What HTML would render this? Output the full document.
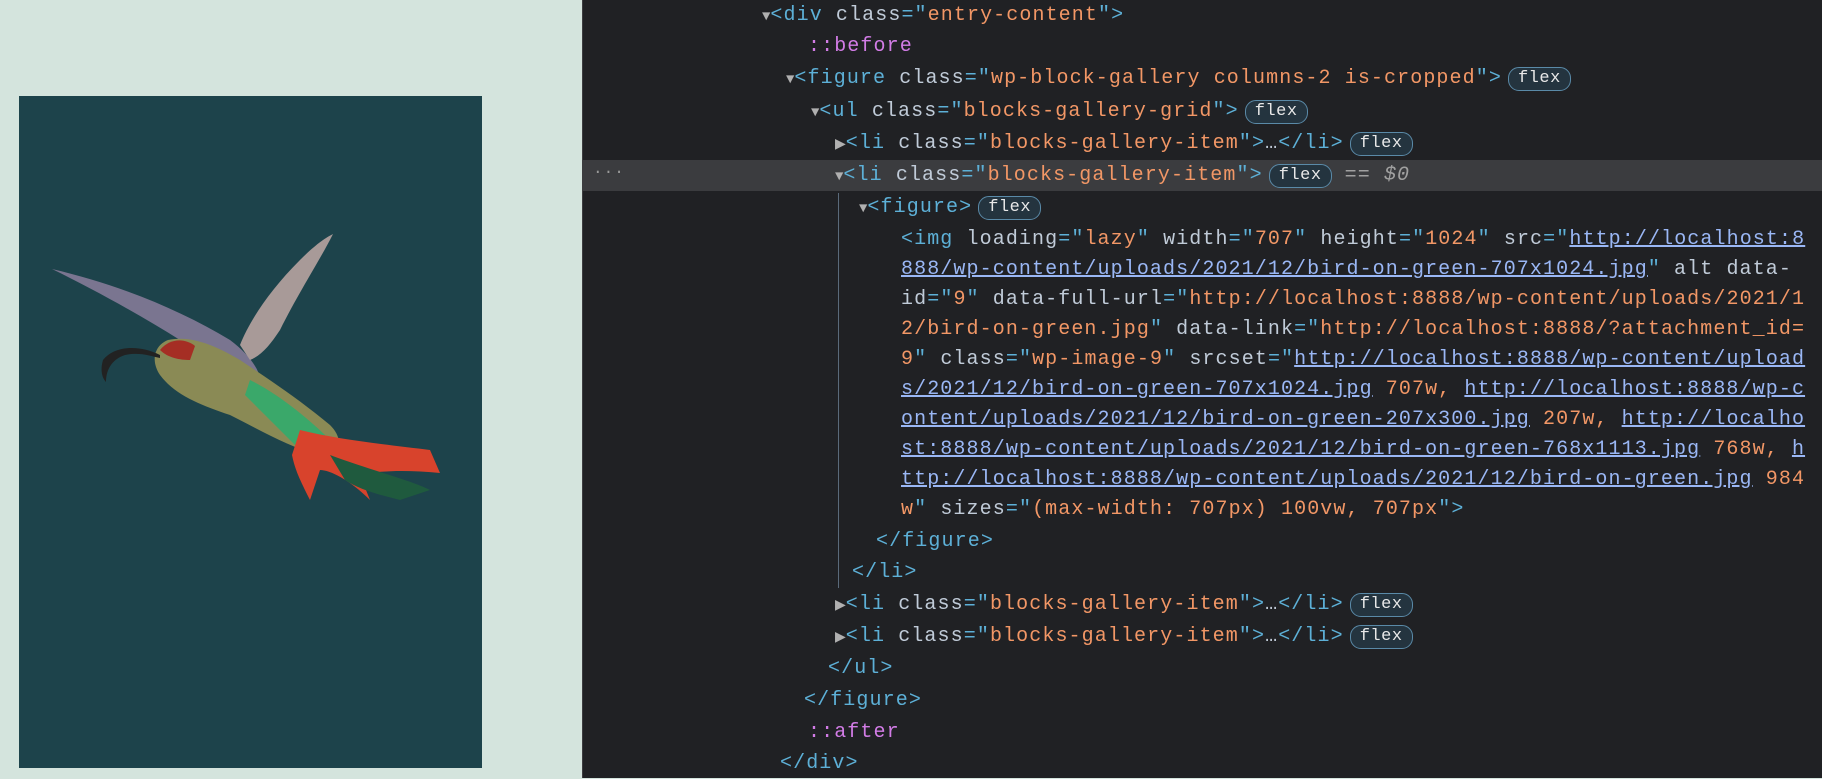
<!DOCTYPE html>
<html><head><meta charset="utf-8"><style>
html,body{margin:0;padding:0;width:1822px;height:778px;overflow:hidden;background:#d4e4dd}
.left{position:absolute;left:0;top:0;width:582px;height:778px;background:#d4e4dd}
.img{position:absolute;left:19px;top:96px;width:463px;height:672px;background:#1d434b}
.dev{position:absolute;left:582px;top:0;width:1240px;height:778px;background:#202124;border-left:1px solid #3d3d40}
.sel{position:absolute;left:0;top:160px;width:1240px;height:31px;background:#3b3c3f}
.dots{position:absolute;left:10px;top:160px;line-height:31px;color:#9a9a9a;font:16px "Liberation Mono",monospace;letter-spacing:1px}
.guide{position:absolute;left:255px;top:193px;width:1px;height:395px;background:#5a6a7a}
.l{position:absolute;white-space:pre;font-family:"Liberation Mono",monospace;font-size:20px;letter-spacing:1.1px;line-height:31px;color:#c0cbd8}
.t{color:#5db0d7}.a{color:#c0cbd8}.v{color:#f29766}.p{color:#d27ce6}.u{color:#9ab7f5;text-decoration:underline}.g{color:#a0a0a0;font-style:italic}
.tri{color:#b0b0b0;font-size:14px;letter-spacing:0}
.b{display:inline-block;font-size:17px;letter-spacing:0.5px;line-height:22px;padding:0 9px;border:1px solid #5a8aa8;border-radius:11px;background:#24343f;color:#e8e8e8;vertical-align:1px;margin-left:6px}
</style></head><body>
<div class="left"><div class="img">
<svg width="463" height="672" viewBox="19 96 463 672">
<path d="M52 269 C120 285 180 310 230 340 C250 355 260 370 262 385 C240 380 210 360 180 340 C140 315 95 290 52 269Z" fill="#7a7590"/>
<path d="M333 234 C320 260 300 290 280 330 C270 345 262 355 250 360 L240 345 C250 320 270 290 300 260 C315 245 325 238 333 234Z" fill="#a89a98"/>
<path d="M168 340 C190 335 215 345 240 360 C270 380 300 400 330 425 C345 440 340 455 320 455 C290 448 260 430 230 415 C200 405 175 395 160 375 C150 360 155 345 168 340Z" fill="#8a8a55"/>
<path d="M250 380 C280 395 310 420 330 440 L300 450 C280 430 260 410 245 395Z" fill="#3aa86a"/>
<path d="M300 430 C340 440 390 445 430 450 L440 473 C410 470 380 470 360 475 L370 500 C350 480 330 470 320 470 L310 500 C300 480 295 470 292 455Z" fill="#d8432c"/>
<path d="M330 455 C370 470 410 480 430 490 L400 500 C380 495 360 490 345 480Z" fill="#1f5a3e"/>
<path d="M160 350 C170 338 185 338 195 346 L190 360 C180 360 168 358 160 350Z" fill="#a52e24"/>
<path d="M160 355 C140 345 115 345 103 360 C100 370 102 378 106 382 C106 372 110 360 125 355 C140 352 150 356 160 358Z" fill="#222"/>
</svg></div></div>
<div class="dev">
<div class="sel"></div><div class="dots">...</div><div class="guide"></div>
<div class="l" style="left:179px;top:0px"><span class="tri">▼</span><span class="t">&lt;div </span><span class="a">class</span><span class="t">="</span><span class="v">entry-content</span><span class="t">"&gt;</span></div>
<div class="l" style="left:225px;top:31px"><span class="p">::before</span></div>
<div class="l" style="left:203px;top:63px"><span class="tri">▼</span><span class="t">&lt;figure </span><span class="a">class</span><span class="t">="</span><span class="v">wp-block-gallery columns-2 is-cropped</span><span class="t">"&gt;</span><span class="b">flex</span></div>
<div class="l" style="left:228px;top:96px"><span class="tri">▼</span><span class="t">&lt;ul </span><span class="a">class</span><span class="t">="</span><span class="v">blocks-gallery-grid</span><span class="t">"&gt;</span><span class="b">flex</span></div>
<div class="l" style="left:252px;top:128px"><span class="tri">▶</span><span class="t">&lt;li </span><span class="a">class</span><span class="t">="</span><span class="v">blocks-gallery-item</span><span class="t">"&gt;</span>…<span class="t">&lt;/li&gt;</span><span class="b">flex</span></div>
<div class="l" style="left:252px;top:160px"><span class="tri">▼</span><span class="t">&lt;li </span><span class="a">class</span><span class="t">="</span><span class="v">blocks-gallery-item</span><span class="t">"&gt;</span><span class="b">flex</span> <span class="g">== $0</span></div>
<div class="l" style="left:276px;top:192px"><span class="tri">▼</span><span class="t">&lt;figure&gt;</span><span class="b">flex</span></div>
<div class="l" style="left:318px;top:224px"><span class="t">&lt;img </span><span class="a">loading</span><span class="t">="</span><span class="v">lazy</span><span class="t">" </span><span class="a">width</span><span class="t">="</span><span class="v">707</span><span class="t">" </span><span class="a">height</span><span class="t">="</span><span class="v">1024</span><span class="t">" </span><span class="a">src</span><span class="t">="</span><span class="u">http://localhost:8</span></div>
<div class="l" style="left:318px;top:254px"><span class="u">888/wp-content/uploads/2021/12/bird-on-green-707x1024.jpg</span><span class="t">" </span><span class="a">alt data-</span></div>
<div class="l" style="left:318px;top:284px"><span class="a">id</span><span class="t">="</span><span class="v">9</span><span class="t">" </span><span class="a">data-full-url</span><span class="t">="</span><span class="v">http://localhost:8888/wp-content/uploads/2021/1</span></div>
<div class="l" style="left:318px;top:314px"><span class="v">2/bird-on-green.jpg</span><span class="t">" </span><span class="a">data-link</span><span class="t">="</span><span class="v">http://localhost:8888/?attachment_id=</span></div>
<div class="l" style="left:318px;top:344px"><span class="v">9</span><span class="t">" </span><span class="a">class</span><span class="t">="</span><span class="v">wp-image-9</span><span class="t">" </span><span class="a">srcset</span><span class="t">="</span><span class="u">http://localhost:8888/wp-content/upload</span></div>
<div class="l" style="left:318px;top:374px"><span class="u">s/2021/12/bird-on-green-707x1024.jpg</span><span class="v"> 707w, </span><span class="u">http://localhost:8888/wp-c</span></div>
<div class="l" style="left:318px;top:404px"><span class="u">ontent/uploads/2021/12/bird-on-green-207x300.jpg</span><span class="v"> 207w, </span><span class="u">http://localho</span></div>
<div class="l" style="left:318px;top:434px"><span class="u">st:8888/wp-content/uploads/2021/12/bird-on-green-768x1113.jpg</span><span class="v"> 768w, </span><span class="u">h</span></div>
<div class="l" style="left:318px;top:464px"><span class="u">ttp://localhost:8888/wp-content/uploads/2021/12/bird-on-green.jpg</span><span class="v"> 984</span></div>
<div class="l" style="left:318px;top:494px"><span class="v">w</span><span class="t">" </span><span class="a">sizes</span><span class="t">="</span><span class="v">(max-width: 707px) 100vw, 707px</span><span class="t">"&gt;</span></div>
<div class="l" style="left:293px;top:526px"><span class="t">&lt;/figure&gt;</span></div>
<div class="l" style="left:269px;top:557px"><span class="t">&lt;/li&gt;</span></div>
<div class="l" style="left:252px;top:589px"><span class="tri">▶</span><span class="t">&lt;li </span><span class="a">class</span><span class="t">="</span><span class="v">blocks-gallery-item</span><span class="t">"&gt;</span>…<span class="t">&lt;/li&gt;</span><span class="b">flex</span></div>
<div class="l" style="left:252px;top:621px"><span class="tri">▶</span><span class="t">&lt;li </span><span class="a">class</span><span class="t">="</span><span class="v">blocks-gallery-item</span><span class="t">"&gt;</span>…<span class="t">&lt;/li&gt;</span><span class="b">flex</span></div>
<div class="l" style="left:245px;top:653px"><span class="t">&lt;/ul&gt;</span></div>
<div class="l" style="left:221px;top:685px"><span class="t">&lt;/figure&gt;</span></div>
<div class="l" style="left:225px;top:717px"><span class="p">::after</span></div>
<div class="l" style="left:197px;top:748px"><span class="t">&lt;/div&gt;</span></div>
</div>
</body></html>
